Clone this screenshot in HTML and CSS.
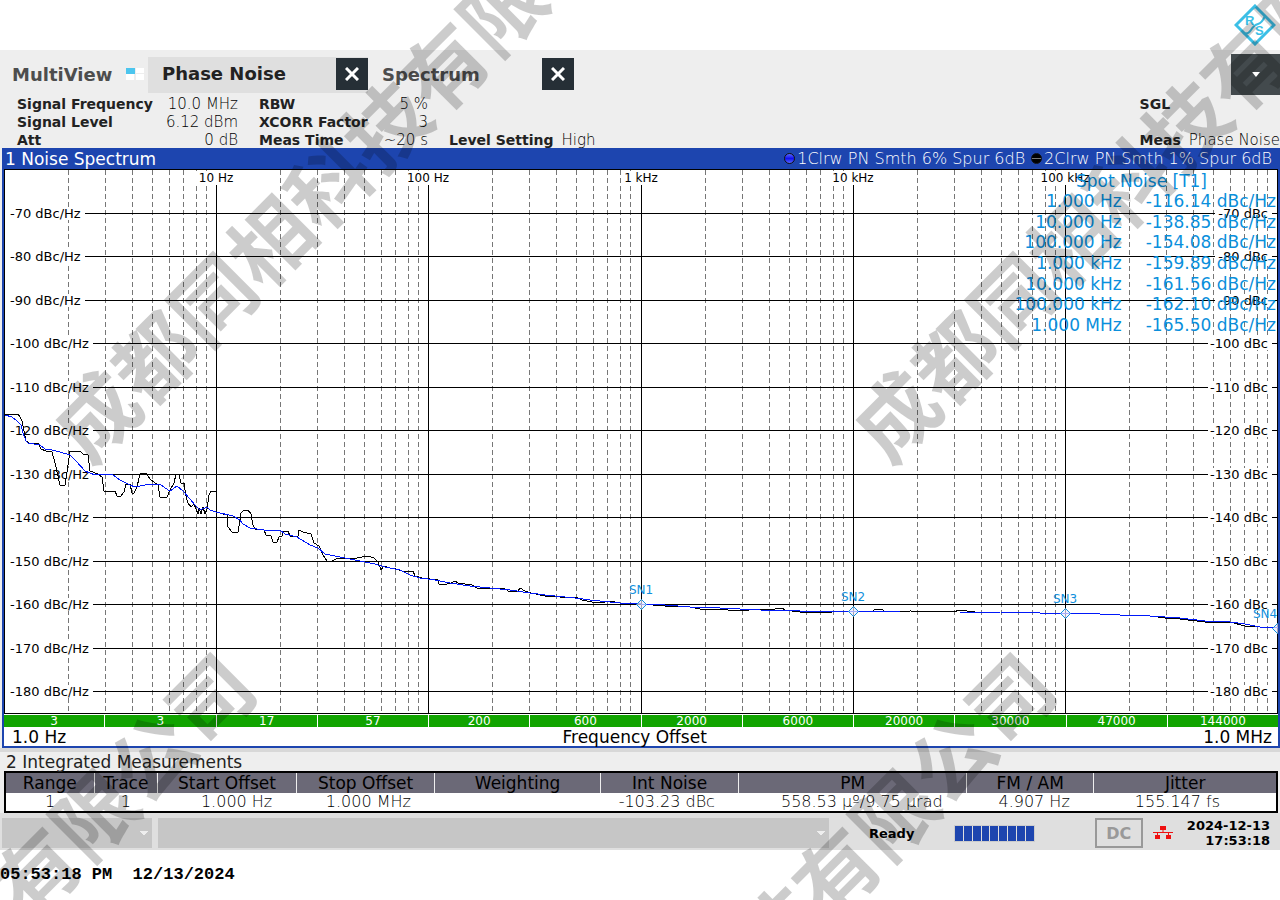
FILE: index.html
```html
<!DOCTYPE html>
<html lang="en">

<head>
    <meta charset="UTF-8">
    <title>Phase Noise</title>
    <link rel="stylesheet" href="styles.css">
</head>

<body>
    <header class="top">
        <svg class="logo" width="42" height="42" viewBox="0 0 42 42" role="img" aria-label="R&amp;S">
            <path d="M21 2L40 21L21 40L2 21Z" fill="none" stroke="#3bbfe6" stroke-width="3" />
            <path d="M9 29Q14 31 17 26T24 20T31 12" fill="none" stroke="#3bbfe6" stroke-width="2" />
            <text x="11" y="21">R</text>
            <text x="21" y="31">S</text>
        </svg>
    </header>

    <main class="screen">
        <nav class="tabs">
            <a class="tab multi" href="#">MultiView
                <svg width="18" height="12" viewBox="0 0 18 12" aria-hidden="true">
                    <path d="M10 0h8v5h-8zM0 6h8v6H0zM10 6h8v6h-8z" fill="#fff" />
                    <path d="M0 0h9v6H0z" fill="#4cc5ee" />
                </svg>
            </a>
            <div class="tab active">
                <a href="#">Phase Noise</a>
                <button class="close" aria-label="Close Phase Noise">
                    <svg width="14" height="14" viewBox="0 0 14 14"><path d="M1 1L13 13M13 1L1 13" /></svg>
                </button>
            </div>
            <div class="tab">
                <a href="#">Spectrum</a>
                <button class="close" aria-label="Close Spectrum">
                    <svg width="14" height="14" viewBox="0 0 14 14"><path d="M1 1L13 13M13 1L1 13" /></svg>
                </button>
            </div>
            <button class="more" aria-label="More tabs">
                <svg width="8" height="5" viewBox="0 0 8 5"><path d="M0 0h8L4 5z" fill="#fff" /></svg>
            </button>
        </nav>

        <section class="params">
            <dl class="param-col first">
                <dt>Signal Frequency</dt><dd>10.0 MHz</dd>
                <dt>Signal Level</dt><dd>6.12 dBm</dd>
                <dt>Att</dt><dd>0 dB</dd>
            </dl>
            <dl class="param-col second">
                <dt>RBW</dt><dd>5 %</dd>
                <dt>XCORR Factor</dt><dd>3</dd>
                <dt>Meas Time</dt><dd>~20 s</dd>
            </dl>
            <dl class="param-line">
                <dt>Level Setting</dt><dd>High</dd>
            </dl>
            <div class="mode">
                <b>SGL</b>
                <dl class="param-line">
                    <dt>Meas</dt><dd>Phase Noise</dd>
                </dl>
            </div>
        </section>

        <section class="spectrum">
            <div class="title">
                <h2>1 Noise Spectrum</h2>
                <span class="trace"><i class="dot blue"></i>1Clrw PN Smth 6% Spur 6dB</span>
                <span class="trace"><i class="dot black"></i>2Clrw PN Smth 1% Spur 6dB</span>
            </div>
            <div class="plot">
                <svg class="chart" viewBox="4 169 1274 545" role="img" aria-label="Noise spectrum">
                    <defs>
                        <path id="decade" d="M64.5 170V713M101.5 170V713M128.5 170V713M148.5 170V713M165.5 170V713M179.5 170V713M192.5 170V713M202.5 170V713" />
                        <path id="marker" d="M-4.500 .5L.5 -4.500L5.500 .5L.5 5.500Z" />
                    </defs>
                    <!-- minor grid -->
                    <g class="minor">
                        <use href="#decade" x="4" />
                        <use href="#decade" x="216" />
                        <use href="#decade" x="428" />
                        <use href="#decade" x="641" />
                        <use href="#decade" x="853" />
                        <use href="#decade" x="1065" />
                    </g>
                    <!-- keeps the axis labels clear of the grid -->
                    <g class="clear">
                        <path d="M196 171h40v15h-40zM404 171h48v15h-48zM622 171h40v15h-40zM830 171h48v15h-48zM1038 171h54v15h-54z" />
                        <path d="M10 207h75v13h-75zM10 250h75v13h-75zM10 294h75v13h-75zM10 337h83v13h-83zM10 381h83v13h-83zM10 424h83v13h-83zM10 468h83v13h-83zM10 511h83v13h-83zM10 555h83v13h-83zM10 598h83v13h-83zM10 642h83v13h-83zM10 685h83v13h-83z" />
                        <path d="M1216 207h55v13h-55zM1216 250h55v13h-55zM1216 294h55v13h-55zM1208 337h63v13h-63zM1208 381h63v13h-63zM1208 424h63v13h-63zM1208 468h63v13h-63zM1208 511h63v13h-63zM1208 555h63v13h-63zM1208 598h63v13h-63zM1208 642h63v13h-63zM1208 685h63v13h-63z" />
                    </g>
                    <!-- major grid -->
                    <g class="major">
                        <path d="M216.5 185V713M428.5 185V713M641.5 185V713M853.5 185V713M1065.5 185V713" />
                        <path d="M85 213.5H1215M85 256.5H1215M85 300.5H1215M93 343.5H1208M93 387.5H1208M93 430.5H1208M93 474.5H1208M93 517.5H1208M93 561.5H1208M93 604.5H1208M93 648.5H1208M93 691.5H1208" />
                        <path d="M1272 213.5h6M1272 256.5h6M1272 300.5h6M1272 343.5h6M1272 387.5h6M1272 430.5h6M1272 474.5h6M1272 517.5h6M1272 561.5h6M1272 604.5h6M1272 648.5h6M1272 691.5h6" />
                        <path d="M4.5 169.5H1277.5V713.5H4.5Z" />
                    </g>
                    <g class="xlabels">
                        <text x="216" y="182">10 Hz</text>
                        <text x="428" y="182">100 Hz</text>
                        <text x="641" y="182">1 kHz</text>
                        <text x="853" y="182">10 kHz</text>
                        <text x="1065" y="182">100 kHz</text>
                    </g>
                    <g class="ylabels">
                        <text x="10" y="218">-70 dBc/Hz</text>
                        <text x="10" y="261">-80 dBc/Hz</text>
                        <text x="10" y="305">-90 dBc/Hz</text>
                        <text x="10" y="348">-100 dBc/Hz</text>
                        <text x="10" y="392">-110 dBc/Hz</text>
                        <text x="10" y="435">-120 dBc/Hz</text>
                        <text x="10" y="479">-130 dBc/Hz</text>
                        <text x="10" y="522">-140 dBc/Hz</text>
                        <text x="10" y="566">-150 dBc/Hz</text>
                        <text x="10" y="609">-160 dBc/Hz</text>
                        <text x="10" y="653">-170 dBc/Hz</text>
                        <text x="10" y="696">-180 dBc/Hz</text>
                    </g>
                    <g class="ylabels right">
                        <text x="1268" y="218">-70 dBc</text>
                        <text x="1268" y="261">-80 dBc</text>
                        <text x="1268" y="305">-90 dBc</text>
                        <text x="1268" y="348">-100 dBc</text>
                        <text x="1268" y="392">-110 dBc</text>
                        <text x="1268" y="435">-120 dBc</text>
                        <text x="1268" y="479">-130 dBc</text>
                        <text x="1268" y="522">-140 dBc</text>
                        <text x="1268" y="566">-150 dBc</text>
                        <text x="1268" y="609">-160 dBc</text>
                        <text x="1268" y="653">-170 dBc</text>
                        <text x="1268" y="696">-180 dBc</text>
                    </g>
                    <!-- trace 2, 1% smoothing -->
                    <polyline class="trace2" points="5,414 18,414 20,417 22,421 24,431 26,441 29,443 38,443 41,449 46,451 52,452 55,463 58,476 60,485 65,485 68,465 70,451 80,451 83,454 88,455 90,471 98,474 102,477 104,491 115,491 117,496 121,496 124,492 126,484 130,484 132,493 134,493 137,487 140,474 146,473 150,479 155,483 158,485 160,497 167,497 170,490 174,483 176,474 179,475 181,483 184,483 186,496 188,503 191,507 194,504 196,509 198,514 199,508 201,514 203,507 205,514 207,509 209,495 211,491 216,491 216,512 227,515 228,527 232,532 238,532 240,520 241,513 244,510 248,510 251,514 253,525 255,529 264,530 266,535 271,536 273,542 277,542 279,537 282,536 283,531 288,531 290,536 298,536 299,530 303,532 311,534 314,543 319,546 323,555 327,561 331,562 336,559 345,558 357,558 362,557 368,556 374,558 378,562 381,570 384,566 390,568 396,569 402,571 413,571 415,576 422,578 438,580 439,584 447,584 451,583 455,581 458,583 465,584 472,585 477,588 490,588 505,589 510,592 518,591 520,588 525,591 531,593 545,596 560,597 576,597 582,600 592,602 605,602 610,601 620,603 641,604 665,606 680,606 690,607 700,609 715,609 740,611 758,609 774,610 776,608 782,608 785,610 800,612 832,612 845,611 873,611 875,609 883,610 885,612 910,611 955,612 958,610 975,612 1000,612 1040,613 1080,613 1120,615 1150,616 1165,618 1180,619 1205,622 1230,622 1245,626 1260,627 1278,628" />
                    <!-- trace 1, 6% smoothing -->
                    <polyline class="trace1" points="5,415 12,417 17,421 21,425 23,433 26,441 28,443 40,445 45,449 52,450 60,452 70,455 76,461 85,471 95,475 112,474 120,480 130,485 135,487 150,484 160,484 165,488 170,491 177,486 183,491 190,499 195,505 200,510 207,507 210,510 216,512 233,516 240,520 243,524 250,528 264,530 280,530 285,534 297,537 310,545 318,548 325,554 335,556 345,558 360,561 375,564 385,567 400,570 410,575 420,578 435,580 450,583 470,586 490,588 510,590 530,593 545,595 575,598 590,600 620,603 641,604 665,605 690,607 720,608 760,610 800,611 853,611 900,612 960,612 1000,612 1040,613 1080,613 1120,615 1150,616 1180,618 1205,621 1230,622 1245,624 1260,627 1278,628" />
                    <g class="markers">
                        <use href="#marker" x="641" y="604" />
                        <use href="#marker" x="853" y="611" />
                        <use href="#marker" x="1065" y="613" />
                        <use href="#marker" x="1277" y="628" />
                        <text x="641" y="594">SN1</text>
                        <text x="853" y="601">SN2</text>
                        <text x="1065" y="603">SN3</text>
                        <text x="1265" y="618">SN4</text>
                    </g>
                </svg>
                <table class="spot">
                    <thead>
                        <tr><th colspan="2">Spot Noise [T1]</th></tr>
                    </thead>
                    <tbody>
                        <tr><td>1.000 Hz</td><td>-116.14 dBc/Hz</td></tr>
                        <tr><td>10.000 Hz</td><td>-138.85 dBc/Hz</td></tr>
                        <tr><td>100.000 Hz</td><td>-154.08 dBc/Hz</td></tr>
                        <tr><td>1.000 kHz</td><td>-159.89 dBc/Hz</td></tr>
                        <tr><td>10.000 kHz</td><td>-161.56 dBc/Hz</td></tr>
                        <tr><td>100.000 kHz</td><td>-162.10 dBc/Hz</td></tr>
                        <tr><td>1.000 MHz</td><td>-165.50 dBc/Hz</td></tr>
                    </tbody>
                </table>
            </div>
            <div class="counts">
                <span>3</span><span>3</span><span>17</span><span>57</span><span>200</span><span>600</span>
                <span>2000</span><span>6000</span><span>20000</span><span>30000</span><span>47000</span><span>144000</span>
            </div>
            <div class="axis">
                <span>1.0 Hz</span>
                <span>Frequency Offset</span>
                <span>1.0 MHz</span>
            </div>
        </section>

        <section class="integrated">
            <h2>2 Integrated Measurements</h2>
            <table class="results">
                <colgroup>
                    <col class="w-range"><col class="w-trace"><col class="w-start"><col class="w-stop"><col class="w-weight">
                    <col class="w-int"><col class="w-pm"><col class="w-fm"><col class="w-jitter">
                </colgroup>
                <thead>
                    <tr>
                        <th>Range</th><th>Trace</th><th>Start Offset</th><th>Stop Offset</th><th>Weighting</th>
                        <th>Int Noise</th><th>PM</th><th>FM / AM</th><th>Jitter</th>
                    </tr>
                </thead>
                <tbody>
                    <tr>
                        <td class="mid">1</td><td class="mid">1</td><td>1.000 Hz</td><td>1.000 MHz</td><td></td>
                        <td>-103.23 dBc</td><td>558.53 µº/9.75 µrad</td><td>4.907 Hz</td><td class="last">155.147 fs</td>
                    </tr>
                </tbody>
            </table>
        </section>

        <footer class="status">
            <select class="short" aria-label="Message type" disabled></select>
            <select class="long" aria-label="Message" disabled></select>
            <div class="state">
                <span class="ready">Ready</span>
                <div class="bar"><i></i><i></i><i></i><i></i><i></i><i></i><i></i><i></i><i></i></div>
                <button class="dc" disabled>DC</button>
                <svg class="net" width="20" height="14" viewBox="0 0 20 14" role="img" aria-label="Network">
                    <path d="M7 0h6v4H7zM2 9h5v4H2zM13 9h5v4h-5z" fill="#e11" />
                    <path d="M0 6.500H20M10 4V7M4.500 6.500V9M15.500 6.500V9" fill="none" stroke="#e11" />
                </svg>
                <time class="clock">2024-12-13<br>17:53:18</time>
            </div>
        </footer>
    </main>

    <p class="stamp">05:53:18 PM&nbsp; 12/13/2024</p>

    <div class="watermarks" aria-hidden="true">
        <span class="mark upper">成都同相科技有限公司</span>
        <span class="mark upper east">成都同相科技有限公司</span>
        <span class="mark lower">成都同相科技有限公司</span>
        <span class="mark lower east">成都同相科技有限公司</span>
    </div>
</body>

</html>
```
FILE: styles.css
```css
* {
    box-sizing: border-box;
}

body {
    margin: 0;
    background: #fff;
    color: #000;
    font-family: "DejaVu Sans", Verdana, sans-serif;
    font-size: 16px;
    position: relative;
    overflow: hidden;
    min-height: 100vh;
}

h2 {
    margin: 0;
    font-size: 17px;
    font-weight: normal;
}

a {
    color: inherit;
    text-decoration: none;
}

button {
    border: none;
    padding: 0;
    font-family: inherit;
}

/* top strip */
.top {
    height: 50px;
    display: flex;
    justify-content: flex-end;
    padding: 4px 4px 0 0;
}

.logo text {
    font: bold 13px "Liberation Sans", sans-serif;
    fill: #3bbfe6;
}

.screen {
    background: #eee;
}

/* tabs */
.tabs {
    display: flex;
    padding-top: 4px;
    height: 44px;
    font-size: 18px;
    font-weight: bold;
    color: #4d4d4d;
}

.tab {
    display: flex;
    align-items: center;
    justify-content: space-between;
    width: 206px;
    height: 40px;
    padding-left: 14px;
}

.tab.multi {
    width: 148px;
    padding: 0 4px 0 12px;
}

.tab.active {
    width: 220px;
    height: 36px;
    margin-top: 3px;
    padding-bottom: 3px;
    background: #dfdfdf;
    color: #222;
}

.close {
    width: 32px;
    height: 32px;
    background: #262f36;
}

.close svg {
    display: block;
    margin: auto;
    fill: none;
    stroke: #fff;
    stroke-width: 3;
}

.more {
    width: 49px;
    height: 41px;
    margin-left: auto;
    background: #434a4d;
}

.more svg {
    display: block;
    margin: auto;
}

/* measurement settings */
.params {
    display: flex;
    align-items: flex-end;
    gap: 21px;
    padding: 1px 0 0 17px;
    font-size: 14px;
    line-height: 18px;
    color: #222;
}

.params dl,
.params dd {
    margin: 0;
}

.params dt,
.params b {
    font-weight: bold;
}

.params dd {
    text-align: right;
    font-size: 15px;
    font-weight: 200;
    color: #000;
}

.param-col {
    display: grid;
    grid-template-columns: auto auto;
    justify-content: space-between;
}

.first {
    width: 221px;
}

.second {
    width: 169px;
}

.param-line {
    display: flex;
    gap: 8px;
}

.mode {
    margin-left: auto;
    display: grid;
    gap: 18px;
}

/* spectrum window */
.spectrum {
    margin: -1px 0 0 2px;
    border: solid #1d45af;
    border-width: 0 2px 2px;
    background: #fff;
}

.title {
    display: flex;
    align-items: center;
    gap: 6px;
    height: 21px;
    padding: 0 6px 0 1px;
    background: #1d45af;
    color: #fff;
    line-height: 20px;
}

.title h2 {
    margin-right: auto;
}

.trace {
    display: flex;
    align-items: center;
    gap: 2px;
    font-weight: 200;
}

.dot {
    width: 11px;
    height: 11px;
    border: 1px solid #111;
    border-radius: 50%;
}

.dot.blue {
    background: linear-gradient(#56f, #11e 50%, #56f);
}

.dot.black {
    background: linear-gradient(#000 45%, #777 50%, #000 55%);
}

.plot {
    position: relative;
}

.chart {
    display: block;
    width: 100%;
    height: auto;
    font-size: 12px;
}

.minor {
    stroke: #777;
    stroke-dasharray: 5 3;
    shape-rendering: crispEdges;
}

.major {
    fill: none;
    stroke: #000;
    shape-rendering: crispEdges;
}

.clear {
    fill: #fff;
}

.xlabels {
    text-anchor: middle;
}

.ylabels {
    font-size: 13px;
}

.ylabels.right {
    text-anchor: end;
}

.trace1,
.trace2 {
    fill: none;
    stroke: #000;
    shape-rendering: crispEdges;
}

.trace1 {
    stroke: #0018f9;
}

.markers use {
    fill: #ebebff;
    fill-opacity: 0.7;
    stroke: #1190dd;
}

.markers text {
    fill: #1190dd;
    text-anchor: middle;
}

.spot {
    position: absolute;
    top: 2px;
    right: 2px;
    height: 164px;
    border-collapse: collapse;
    color: #0a8fdc;
    font-size: 17px;
}

.spot th,
.spot td {
    padding: 0 0 0 24px;
    text-align: right;
    font-weight: normal;
    line-height: 20px;
    white-space: nowrap;
}

.spot th {
    padding-right: 69px;
}

.counts {
    display: flex;
    gap: 1px;
    margin-top: 1px;
    font-size: 12px;
    line-height: 12px;
    text-align: center;
}

.counts span {
    flex: 101 0 0;
    background: #11a400;
    color: #fff;
}

.counts span:nth-child(even) {
    flex-grow: 111;
}

.axis {
    display: flex;
    justify-content: space-between;
    padding: 1px 6px 0 8px;
    font-size: 17px;
    line-height: 18px;
}

/* result table */
.integrated {
    border-top: 4px solid #d8d8d8;
    padding: 0 2px 0 4px;
    color: #222;
}

.integrated h2 {
    padding: 1px 0 0 2px;
    line-height: 18px;
}

.results {
    width: 100%;
    table-layout: fixed;
    border-collapse: collapse;
    border: 2px solid #000;
    background: #fff;
    color: #000;
}

.results th {
    padding: 0;
    border-right: 1px solid #eee;
    background: #6b6977;
    font-size: 17px;
    font-weight: normal;
    line-height: 20px;
}

.results th:last-child {
    border-right: none;
}

.results td {
    padding: 0 24px 0 0;
    font-weight: 200;
    line-height: 18px;
    text-align: right;
    white-space: nowrap;
}

.results td.mid {
    padding: 0;
    text-align: center;
}

.results td.last {
    padding-right: 56px;
}

.w-range { width: 7%; }
.w-trace { width: 5%; }
.w-start { width: 10.9%; }
.w-stop { width: 10.9%; }
.w-weight { width: 13%; }
.w-int { width: 10.9%; }
.w-pm { width: 17.9%; }
.w-fm { width: 10%; }
.w-jitter { width: 14.4%; }

/* status bar */
.status {
    display: flex;
    gap: 6px;
    padding: 5px 10px 2px 2px;
    background: #dfdfdf;
    font-size: 13px;
    font-weight: bold;
}

.status select {
    appearance: none;
    height: 30px;
    border: none;
    opacity: 1;
    background: #c6c6c6 conic-gradient(from -39deg at 50% 100%, #eee 78deg, transparent 0) no-repeat right 4px center / 8px 5px;
}

.short {
    width: 150px;
}

.long {
    flex: 1;
}

.state {
    display: flex;
    align-items: center;
    width: 435px;
    padding-left: 34px;
}

.bar {
    display: flex;
    gap: 1px;
    width: 81px;
    height: 17px;
    margin: 0 60px 0 auto;
    border: 1px solid #ccc;
}

.bar i {
    flex: 1;
    background: #1d45af;
}

.dc {
    width: 48px;
    height: 30px;
    border: 2px solid #999;
    background: none;
    color: #999;
    font-size: 16px;
    font-weight: bold;
}

.net {
    margin: 0 14px 0 10px;
}

.clock {
    line-height: 15px;
    text-align: right;
}

.stamp {
    margin: 15px 0 0;
    font: bold 17px/20px "Liberation Mono", monospace;
}

/* diagonal watermark */
.watermarks {
    position: absolute;
    inset: 0;
    overflow: hidden;
    pointer-events: none;
}

.mark {
    position: absolute;
    left: 65px;
    top: 401px;
    font: bold 82px/82px "Noto Sans CJK SC", sans-serif;
    white-space: nowrap;
    color: rgba(0, 0, 0, 0.2);
    transform: rotate(-45deg);
    transform-origin: left center;
}

.mark.east {
    left: 865px;
}

.mark.lower {
    left: -343px;
    top: 1206px;
}

.mark.lower.east {
    left: 457px;
}
```
